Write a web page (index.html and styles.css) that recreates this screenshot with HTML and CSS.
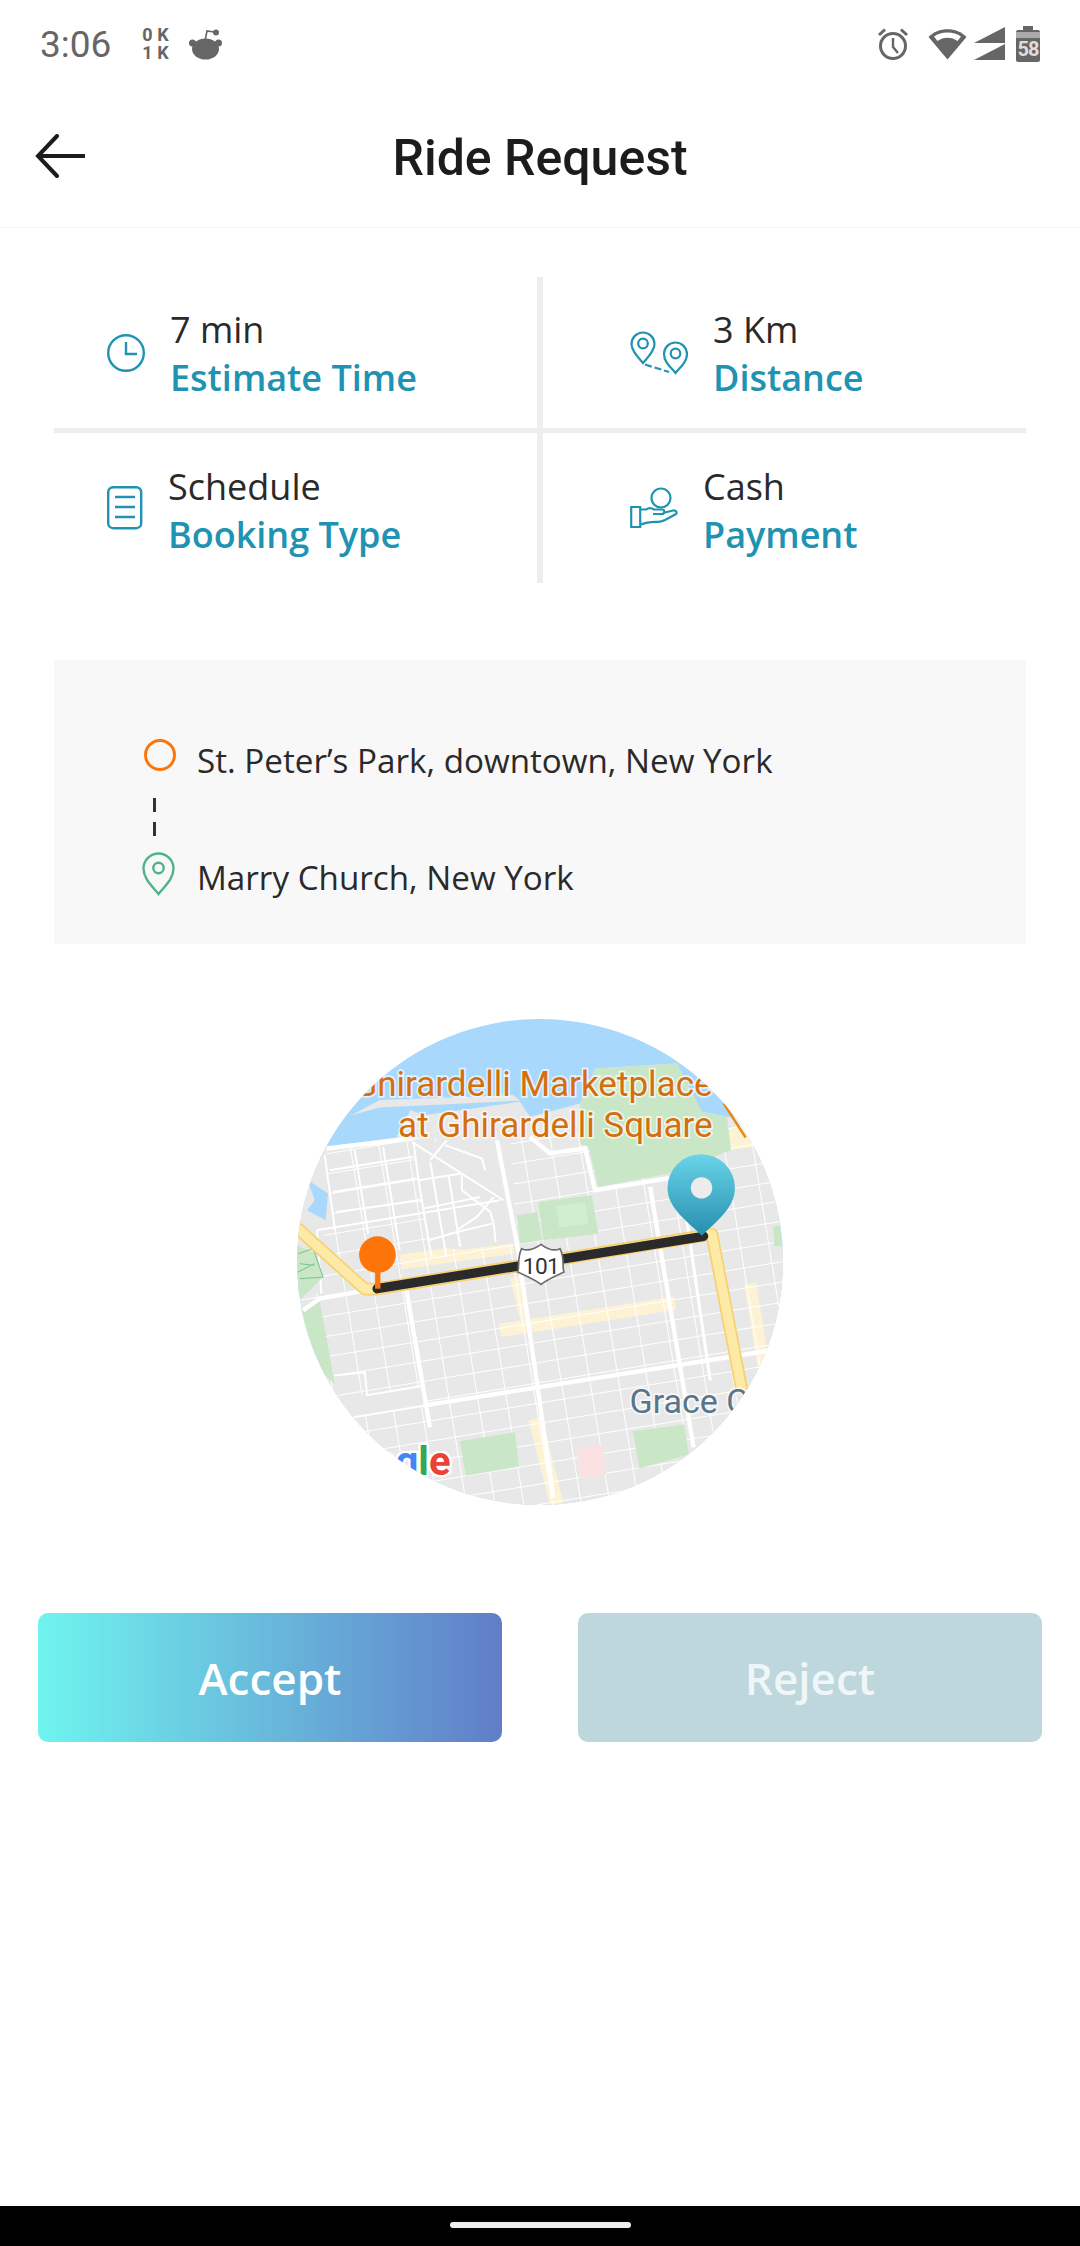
FILE: index.html
```html
<!DOCTYPE html>
<html lang="en">
<head>

	<!-- Page title -->
	<title>Ride Request</title>

	<!-- Meta tags -->
	<meta charset="UTF-8">
	<meta name="viewport" content="width=device-width, initial-scale=1.0">

	<!-- Style -->
	<link rel="stylesheet" href="styles.css">

</head>
<body>
<main class="page">

	<!-- Status bar -->
	<div class="status">
		<span class="status-time">3:06</span>
		<span class="status-speed">0 K<br>1 K</span>
		<svg class="status-reddit" width="33" height="31" viewBox="0 0 33 31">
			<path d="M16 12 18 2 25 3" fill="none" stroke="#666" stroke-width="1.600"/>
			<circle cx="27" cy="3.500" r="3" fill="#666"/>
			<circle cx="3.500" cy="14" r="3.500" fill="#666"/>
			<circle cx="29.500" cy="14" r="3.500" fill="#666"/>
			<ellipse cx="16.500" cy="20" rx="13.500" ry="10.500" fill="#666"/>
		</svg>
		<div class="status-right">
			<svg width="32" height="34" viewBox="0 0 32 34">
				<circle cx="16" cy="19" r="12.500" fill="none" stroke="#666" stroke-width="3"/>
				<path d="M16 11v9l5 6" fill="none" stroke="#666" stroke-width="2.400"/>
				<path d="M2 8 8 2.500M30 8 24 2.500" fill="none" stroke="#666" stroke-width="3"/>
			</svg>
			<svg class="status-wifi" width="39" height="32" viewBox="0 0 39 32">
				<path d="M19.500 31.500 .5 9C10-1.500 29-1.500 38.500 9z" fill="#666"/>
				<path d="M6 8.500C13 3 26 3 33 8.500L29.500 13C24 8.500 15 8.500 9.500 13z" fill="#fff"/>
			</svg>
			<svg class="status-signal" width="31" height="34" viewBox="0 0 31 34">
				<path d="M31 0V16H0L31 0z" fill="#666"/>
				<path d="M31 17V33H0L31 17z" fill="#666"/>
			</svg>
			<div class="status-battery"><span>58</span></div>
		</div>
	</div>

	<!-- Title bar -->
	<header class="topbar">
		<svg class="back" width="50" height="44" viewBox="0 0 50 44">
			<path d="M22 2 3 22l19 20M3 22h46" fill="none" stroke="#1c1c1c" stroke-width="4" stroke-linecap="round"/>
		</svg>
		<h1>Ride Request</h1>
	</header>

	<!-- Trip info -->
	<section class="info">

		<div class="cell cell-a">
			<svg width="38" height="38" viewBox="0 0 38 38" fill="none" stroke="#2093b2" stroke-width="2.400">
				<circle cx="19" cy="19" r="17.800"/>
				<path d="M19 8v12h11"/>
			</svg>
			<div class="cell-text">
				<span>7 min</span>
				<strong>Estimate Time</strong>
			</div>
		</div>

		<div class="cell cell-b">
			<svg width="58" height="44" viewBox="0 0 58 44" fill="none" stroke="#2093b2" stroke-width="2.200">
				<path d="M13 32C8 26 1.500 20 1.500 13a11.500 11.500 0 0 1 23 0C24.500 20 18 26 13 32z"/>
				<circle cx="13" cy="12.500" r="4.800"/>
				<path d="M45.500 42C40.500 36 34 31 34 23a11.500 11.500 0 0 1 23 0C57 31 50.500 36 45.500 42z"/>
				<circle cx="45.500" cy="22.500" r="4.800"/>
				<path d="M15 33.500 39 41" stroke-dasharray="7 3"/>
			</svg>
			<div class="cell-text">
				<span>3 Km</span>
				<strong>Distance</strong>
			</div>
		</div>

		<div class="cell cell-c">
			<svg width="36" height="44" viewBox="0 0 36 44" fill="none" stroke="#2093b2" stroke-width="2.400">
				<rect x="1.200" y="1.200" width="33" height="41" rx="5"/>
				<path d="M8 11h20M8 21h20M8 31h20"/>
			</svg>
			<div class="cell-text">
				<span>Schedule</span>
				<strong>Booking Type</strong>
			</div>
		</div>

		<div class="cell cell-d">
			<svg width="48" height="42" viewBox="0 0 48 42" fill="none" stroke="#2093b2" stroke-width="2.200">
				<circle cx="31" cy="11" r="9.500"/>
				<path d="M1.200 20h9v20h-9z"/>
				<path d="M10 22.500h6c3-2 5-2 8 0h8c3 0 3 4.500 0 4.500h-9M33 26l10-2.500c3-.5 4.500 2 3 3.500L35 33c-2 1-3 1.800-7 1.800-6 0-11-.3-18 3"/>
			</svg>
			<div class="cell-text">
				<span>Cash</span>
				<strong>Payment</strong>
			</div>
		</div>

	</section>

	<!-- Route -->
	<section class="route">
		<div class="route-row route-from">
			<span class="ring"></span>
			<p>St. Peter’s Park, downtown, New York</p>
		</div>
		<div class="route-dash"></div>
		<div class="route-row route-to">
			<svg width="33" height="44" viewBox="0 0 33 44" fill="none" stroke="#4fb388" stroke-width="2.400">
				<path d="M16.500 42C10 34 1.500 27 1.500 16.500a15 15 0 0 1 30 0C31.500 27 23 34 16.500 42z"/>
				<circle cx="16.500" cy="16" r="5.200"/>
			</svg>
			<p>Marry Church, New York</p>
		</div>
	</section>

	<!-- Map -->
	<div class="map">
		<svg width="486" height="486" viewBox="52 57 1456 1456">
			<defs>
				<pattern id="blocks" width="85" height="60" patternUnits="userSpaceOnUse" patternTransform="translate(205 935) rotate(-9.300)">
					<path d="M0 0H85M0 0V60" fill="none" stroke="#fff" stroke-width="6"/>
				</pattern>
				<linearGradient id="pin" x1="0" y1="0" x2="0" y2="1">
					<stop offset="0" stop-color="#6ad4e9"/>
					<stop offset="1" stop-color="#268eae"/>
				</linearGradient>
			</defs>

			<!-- Water and land -->
			<rect x="52" y="57" width="1456" height="1456" fill="#a9d8fd"/>
			<path d="M215 345 300 300 700 285 720 302 300 322z" fill="#e8e8e8"/>
			<path d="M40 470 141 440 350 412 392 330 430 345 720 305 750 350 900 310 945 205 1190 190 1265 335 1340 350 1520 340V1520H40z" fill="#e8e8e8"/>
			<path d="M1345 385 1392 380 1420 440 1352 450z" fill="#fdf3d4"/>

			<!-- Light roads under the streets -->
			<g fill="none" stroke="#fdf3d4">
				<path d="M362 785 700 738" stroke-width="44"/>
				<path d="M660 990 1185 908" stroke-width="40"/>
				<path d="M705 830 745 990" stroke-width="30"/>
				<path d="M1410 850 1450 1100" stroke-width="36"/>
				<path d="M765 1255 830 1510" stroke-width="40"/>
			</g>

			<!-- Street grid -->
			<path d="M140 440 396 415 750 410 1345 380 1520 340V1520H40V880L125 880z" fill="url(#blocks)"/>

			<!-- Patches without the regular grid -->
			<g fill="#e8e8e8">
				<path d="M398 428 690 414 712 728 545 748 450 740z"/>
				<path d="M40 450H138L166 690 112 692 120 880 40 890z"/>
				<path d="M140 1186 262 1184 436 1155 445 1215 222 1250 140 1252z"/>
			</g>
			<path d="M85 540 145 580 138 660 82 630 105 600z" fill="#a9d8fd"/>

			<!-- Irregular streets -->
			<g fill="none" stroke="#fff" stroke-width="6">
				<path d="M396 425 671 600"/>
				<path d="M451 480 501 420"/>
				<path d="M496 435 606 475 616 510"/>
				<path d="M416 540 546 520"/>
				<path d="M431 625 601 590"/>
				<path d="M446 720 531 695 636 670"/>
				<path d="M401 425 416 540 446 720 456 770"/>
				<path d="M451 485 491 720 500 770"/>
				<path d="M506 525 541 740"/>
				<path d="M546 525V570L631 635 641 670 647 725"/>
				<path d="M531 690 591 650 641 590"/>
				<path d="M112 690 660 600"/>
				<path d="M112 690 125 880"/>
				<path d="M166 1125 255 1115 262 1184 436 1155"/>
				<path d="M222 1250 436 1215"/>
				<path d="M135 465 166 690"/>
				<path d="M225 450 265 700"/>
				<path d="M310 440 360 750"/>
				<path d="M150 510 400 470"/>
				<path d="M160 575 410 535"/>
				<path d="M170 635 425 600"/>
			</g>

			<!-- Parks -->
			<g fill="#c9e7c7">
				<path d="M900 312 945 205 1190 190 1265 335 1340 350 1352 450 1165 520 955 560 925 440 900 430z"/>
				<path d="M60 930 120 900 165 1150 60 1060z"/>
				<path d="M40 730 110 760 130 830 60 900 40 880z"/>
				<path d="M775 605 935 585 955 700 790 720z"/>
				<path d="M711 645 771 635 786 720 721 730z"/>
				<path d="M540 1322 705 1295 717 1398 558 1425z"/>
				<path d="M1058 1292 1212 1272 1226 1362 1078 1404z"/>
				<path d="M1478 678 1520 672V735L1482 738z"/>
			</g>
			<path d="M828 618 915 605 925 672 838 682z" fill="#d2eed0"/>
			<path d="M892 1345 968 1332 978 1420 900 1432z" fill="#fbe1e1"/>
			<path d="M55 760 100 745 130 830 60 835M60 790 105 795M55 815 105 790" fill="none" stroke="#7cc48f" stroke-width="3"/>

			<!-- Main streets -->
			<g fill="none" stroke="#fff" stroke-width="13">
				<path d="M141 445 396 415"/>
				<path d="M750 410 810 460 915 445 945 570 1345 505"/>
				<path d="M651 420 711 730 820 1490"/>
				<path d="M380 870 450 1280"/>
				<path d="M1110 560 1240 1340"/>
				<path d="M70 930 120 895 290 865"/>
				<path d="M430 1215 1470 1050"/>
				<path d="M1220 660 1290 1140" stroke-width="9"/>
			</g>

			<!-- Highway -->
			<path d="M40 672 255 866H290L1295 702 1385 1170" fill="none" stroke="#f8d06f" stroke-width="38" stroke-linejoin="round"/>
			<path d="M40 672 255 866H290L1295 702 1385 1170" fill="none" stroke="#fdeaa6" stroke-width="28" stroke-linejoin="round"/>
			<path d="M1330 310 1396 412" fill="none" stroke="#e8890c" stroke-width="7"/>

			<!-- Route line -->
			<path d="M292 865 1270 708" fill="none" stroke="#2a2a2a" stroke-width="28" stroke-linecap="round"/>

			<!-- Labels -->
			<g class="map-poi">
				<text x="1297" y="287">Ghirardelli Marketplace</text>
				<text x="1297" y="410">at Ghirardelli Square</text>
			</g>
			<text class="map-area" x="1048" y="1238">Grace C</text>
			<text class="map-google" x="512" y="1423"><tspan fill="#4285f4">Goog</tspan><tspan fill="#34a853">l</tspan><tspan fill="#ea4335">e</tspan></text>

			<!-- Highway shield -->
			<path d="M725 745C745 755 765 745 783 732 800 745 820 755 840 745 855 775 845 800 852 815 830 825 805 835 783 852 760 835 735 825 713 815 720 800 710 775 725 745z" fill="#fff" stroke="#6e6e6e" stroke-width="5"/>
			<text class="map-shield" x="783" y="820">101</text>

			<!-- Pins -->
			<rect x="286" y="810" width="16" height="55" fill="#fd7509"/>
			<circle cx="293" cy="763" r="55" fill="#fd7509"/>
			<path d="M1265 706C1225 665 1162 625 1162 563a101 101 0 0 1 202 0C1364 625 1305 665 1265 706z" fill="url(#pin)"/>
			<circle cx="1264" cy="563" r="32" fill="#ececec"/>
		</svg>
	</div>

	<!-- Actions -->
	<div class="actions">
		<button class="accept">Accept</button>
		<button class="reject">Reject</button>
	</div>

	<!-- Navigation bar -->
	<div class="navbar"><span></span></div>

</main>
</body>
</html>
```

FILE: styles.css
```css
* {
	box-sizing: border-box;
}

html,
body {
	width: 100%;
	height: 100%;
	margin: 0;
}

body {
	background-color: #fff;
	font-family: 'Open Sans', sans-serif;
	color: #2a2a2a;
}

.page {
	display: flex;
	flex-direction: column;
	width: 1080px;
	height: 2246px;
	overflow: hidden;
}

/* Status bar */

.status {
	display: flex;
	align-items: center;
	height: 88px;
	padding: 0 40px 0 40px;
	color: #666;
	font-family: 'Roboto', sans-serif;
}

.status-time {
	font-size: 37px;
	font-weight: 450;
}

.status-speed {
	margin-left: 31px;
	font-size: 18px;
	font-weight: 700;
	line-height: 18px;
	white-space: nowrap;
}

.status-reddit {
	margin-left: 20px;
}

.status-right {
	display: flex;
	align-items: center;
	margin-left: auto;
}

.status-wifi {
	margin-left: 19px;
}

.status-signal {
	margin-left: 7px;
}

.status-battery {
	position: relative;
	width: 24px;
	height: 32px;
	margin: 3px 0 0 11px;
	border-radius: 2px;
	background: linear-gradient(#666 2px, #aaa 2px, #aaa 8px, #666 8px);
	color: #ddd;
	font-size: 20px;
	font-weight: 700;
	line-height: 38px;
	text-align: center;
}

.status-battery::before {
	content: "";
	position: absolute;
	top: -4px;
	left: 7px;
	width: 10px;
	height: 4px;
	background: #666;
}

.status-battery span {
	position: relative;
	display: block;
	letter-spacing: -1px;
}

/* Title bar */

.topbar {
	position: relative;
	display: flex;
	justify-content: center;
	align-items: center;
	height: 140px;
	border-bottom: 1px solid #f6f6f6;
}

.back {
	position: absolute;
	left: 35px;
	top: 46px;
}

h1 {
	margin: 0;
	font-family: 'Roboto', sans-serif;
	font-size: 50px;
	font-weight: 500;
	color: #1c1c1c;
}

/* Trip info */

.info {
	display: grid;
	grid-template-columns: 489px 483px;
	grid-template-rows: 156px 150px;
	margin: 49px 54px 0;
}

.cell {
	display: flex;
	align-items: center;
	gap: 25px;
}

.cell-a,
.cell-c {
	padding-left: 53px;
	border-right: 6px solid #eee;
}

.cell-b,
.cell-d {
	padding-left: 87px;
}

.cell-a,
.cell-b {
	border-bottom: 5px solid #eee;
}

.cell-text {
	display: flex;
	flex-direction: column;
	padding-top: 3px;
	font-size: 36px;
	line-height: 48px;
}

.cell-c .cell-text,
.cell-d .cell-text {
	padding-top: 5px;
}

.cell-text strong {
	font-weight: 600;
	color: #2093b2;
}

/* Route */

.route {
	height: 284px;
	margin: 77px 54px 0;
	padding: 80px 0 0 88px;
	background: #f8f8f8;
}

.route-row {
	display: flex;
	gap: 22px;
}

.route-row p {
	margin: 0;
	font-size: 33.200px;
	line-height: 44px;
}

.route-from p {
	margin-top: -1px;
}

.route-to p {
	margin-top: 4px;
}

.ring {
	width: 32px;
	height: 32px;
	margin: -1px -1px 0 2px;
	border: 3px solid #fd7509;
	border-radius: 50%;
}

.route-dash {
	width: 3px;
	height: 38px;
	margin: 15px 0 16px 11px;
	background: repeating-linear-gradient(#333 0, #333 14px, transparent 14px, transparent 24px);
}

/* Map */

.map {
	align-self: center;
	width: 486px;
	height: 486px;
	margin-top: 75px;
	border-radius: 50%;
	overflow: hidden;
}

.map svg {
	display: block;
}

.map text {
	font-family: 'Roboto', sans-serif;
}

.map-poi text {
	fill: #d56e0c;
	stroke: #fff;
	stroke-opacity: .7;
	stroke-width: 10px;
	paint-order: stroke;
	font-size: 105px;
	text-anchor: end;
}

.map-area {
	fill: #5a7587;
	stroke: #fff;
	stroke-opacity: .7;
	stroke-width: 10px;
	paint-order: stroke;
	font-size: 102px;
}

.map-google {
	stroke: #fff;
	stroke-width: 14px;
	paint-order: stroke;
	font-size: 120px;
	font-weight: 700;
	text-anchor: end;
}

.map-shield {
	fill: #333;
	font-size: 68px;
	letter-spacing: -2px;
	text-anchor: middle;
}

/* Actions */

.actions {
	display: flex;
	justify-content: space-between;
	margin-top: 108px;
	padding: 0 38px;
}

button {
	width: 464px;
	height: 129px;
	border: none;
	border-radius: 10px;
	color: #fff;
	font-family: 'Open Sans', sans-serif;
	font-size: 44px;
	font-weight: 600;
}

.accept {
	background: linear-gradient(90deg, #6ff4ef, #617dc8);
}

.reject {
	background: #bdd7dd;
	color: #eef6f7;
}

/* Navigation bar */

.navbar {
	display: flex;
	justify-content: center;
	align-items: center;
	height: 40px;
	margin-top: auto;
	padding-bottom: 2px;
	background: #000;
}

.navbar span {
	width: 181px;
	height: 6px;
	border-radius: 3px;
	background: #eee;
}
```
